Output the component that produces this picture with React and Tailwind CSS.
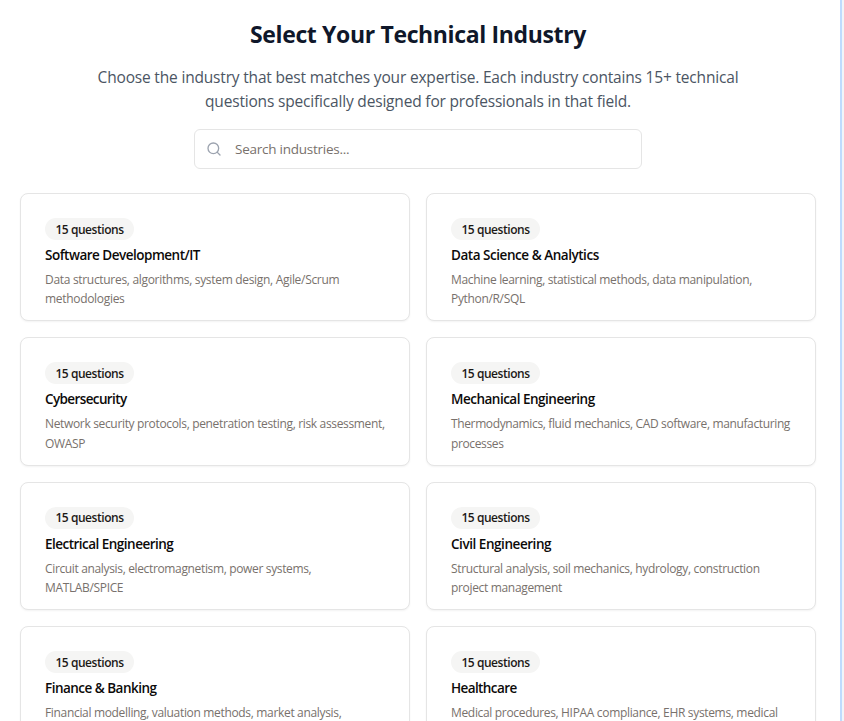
import { Search } from "lucide-react";

const industries = [
  { title: "Software Development/IT", titleClass: "tracking-[-0.5px]", textClass: "tracking-[-0.31px]", lines: ["Data structures, algorithms, system design, Agile/Scrum", "methodologies"] },
  { title: "Data Science & Analytics", titleClass: "tracking-[-0.46px]", textClass: "tracking-[-0.33px]", lines: ["Machine learning, statistical methods, data manipulation,", "Python/R/SQL"] },
  { title: "Cybersecurity", titleClass: "tracking-[-0.62px]", textClass: "tracking-[-0.34px]", lines: ["Network security protocols, penetration testing, risk assessment,", "OWASP"] },
  { title: "Mechanical Engineering", titleClass: "tracking-[-0.5px]", textClass: "tracking-[-0.37px]", lines: ["Thermodynamics, fluid mechanics, CAD software, manufacturing", "processes"] },
  { title: "Electrical Engineering", titleClass: "tracking-[-0.52px]", textClass: "tracking-[-0.35px]", lines: ["Circuit analysis, electromagnetism, power systems,", "MATLAB/SPICE"] },
  { title: "Civil Engineering", titleClass: "tracking-[-0.45px]", textClass: "tracking-[-0.33px]", lines: ["Structural analysis, soil mechanics, hydrology, construction", "project management"] },
  { title: "Finance & Banking", titleClass: "tracking-[-0.52px]", textClass: "tracking-[-0.33px]", lines: ["Financial modelling, valuation methods, market analysis,"] },
  { title: "Healthcare", titleClass: "tracking-[-0.6px]", textClass: "tracking-[-0.33px]", lines: ["Medical procedures, HIPAA compliance, EHR systems, medical"] },
];

function IndustryCard({ title, titleClass, textClass, lines }) {
  return (
    <div className="h-[128.4px] rounded-lg border border-[#e5e5e5] bg-white px-6 pt-6 shadow-xs">
      <div className="flex h-[22px] w-[89px] items-center justify-center rounded-full bg-[#f5f5f4] pt-px text-xs leading-4 font-semibold tracking-[-0.45px] text-[#1c1917]">
        15 questions
      </div>
      <h3 className={`mt-[5.1px] text-[13.5px] leading-5 font-semibold whitespace-nowrap text-[#0c0a09] ${titleClass}`}>{title}</h3>
      <p className={`mt-[4.7px] text-xs leading-[19.5px] whitespace-nowrap text-[#78716c] ${textClass}`}>
        {lines.map((line) => (
          <span key={line} className="block">{line}</span>
        ))}
      </p>
    </div>
  );
}

export default function App() {
  return (
    <div className="flex h-[721px] overflow-hidden bg-white font-['Open_Sans',sans-serif]">
      <main className="w-[840px] shrink-0 pr-6 pl-5">
        <header className="pt-[18px] text-center whitespace-nowrap">
          <h1 className="text-[23px] leading-8 font-bold tracking-[-0.36px] text-[#0f172a]">Select Your Technical Industry</h1>
          <p className="mt-[15px] text-[15.5px] leading-6 tracking-[-0.18px] text-[#4b5563]">
            Choose the industry that best matches your expertise. Each industry contains 15+ technical
            <br />
            questions specifically designed for professionals in that field.
          </p>
        </header>
        <div className="mx-auto mt-4 flex h-10 w-[448px] items-center rounded-md border border-[#e5e5e5] pl-[11px]">
          <Search className="size-4 text-[#9ca3af]" strokeWidth={2} />
          <input className="ml-[13px] w-80 text-[13.5px] tracking-[-0.25px] outline-none placeholder:text-[#78716c]" placeholder="Search industries..." />
        </div>
        <div className="mt-6 grid grid-cols-2 gap-4">
          {industries.map((item) => (
            <IndustryCard key={item.title} {...item} />
          ))}
        </div>
      </main>
      <div className="w-0.5 shrink-0 bg-[#bfdbfe]" />
      <div className="flex-1 bg-[#f1f5f9]" />
    </div>
  );
}
